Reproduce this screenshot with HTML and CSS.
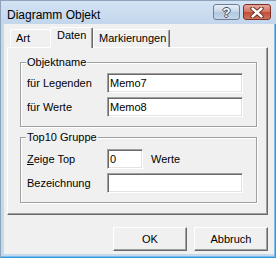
FILE: index.html
```html
<!DOCTYPE html>
<html lang="de">
<head>
    <meta charset="UTF-8">
    <title>Diagramm Objekt</title>
    <link rel="stylesheet" href="styles.css">
</head>
<body>
<div class="window">
    <div class="titlebar">
        <span class="title">Diagramm Objekt</span>
        <span class="cbtn help">?</span>
        <span class="cbtn close">
            <svg width="16" height="11" viewBox="0 0 16 11">
                <path d="M3.5 1.5 L12.5 9.5 M12.5 1.5 L3.5 9.5" stroke="#5a1f17" stroke-width="4.2" stroke-linecap="round"/>
                <path d="M3.5 1.5 L12.5 9.5 M12.5 1.5 L3.5 9.5" stroke="#fff" stroke-width="2.4" stroke-linecap="round"/>
            </svg>
        </span>
    </div>
    <div class="client">
        <div class="tabs">
            <span class="tab tab-art">Art</span>
            <span class="tab active">Daten</span>
            <span class="tab tab-mark">Markierungen</span>
        </div>
        <div class="panel">
            <fieldset class="group">
                <legend>Objektname</legend>
                <div class="row"><label>für Legenden</label><input type="text" value="Memo7"></div>
                <div class="row"><label>für Werte</label><input type="text" value="Memo8"></div>
            </fieldset>
            <fieldset class="group group2">
                <legend>Top10 Gruppe</legend>
                <div class="row"><label><u>Z</u>eige Top</label><input type="text" class="short" value="0"><span class="unit">Werte</span></div>
                <div class="row"><label>Bezeichnung</label><input type="text" value=""></div>
            </fieldset>
        </div>
        <div class="buttons">
            <button class="btn">OK</button>
            <button class="btn">Abbruch</button>
        </div>
    </div>
</div>
</body>
</html>
```

FILE: styles.css
```css
* {
    margin: 0;
    padding: 0;
    box-sizing: border-box;
}

body {
    font-family: "Liberation Sans", Arial, sans-serif;
    font-size: 11px;
    color: #000;
    background: #fff;
}

.window {
    width: 276px;
    height: 258px;
    display: flex;
    flex-direction: column;
    background: #c4d8ee;
    border-top: 1px solid #8ea4bd;
    border-left: 1px solid #8ea4bd;
    box-shadow: inset -1px -1px 0 #2c9be0, inset -2px -2px 0 #7fbce8;
}

/* title bar */
.titlebar {
    height: 23px;
    display: flex;
    align-items: flex-start;
    padding: 0 5px 0 6px;
    background: linear-gradient(#d3e3f4, #c2d6ec);
}

.title {
    flex: 1;
    font-size: 12px;
    line-height: 14px;
    padding-top: 7px;
}

.cbtn {
    margin-top: 3px;
    height: 16px;
    border-radius: 3px;
    display: flex;
    align-items: center;
    justify-content: center;
}

.help {
    width: 27px;
    border: 1px solid #6e7f95;
    background: linear-gradient(#e6eef7, #c6d5e6 50%, #b3c6db 51%, #c5d6e8);
    color: #fff;
    font-weight: bold;
    font-size: 13px;
    text-shadow: 1px 0 0 #3d4c60, -1px 0 0 #3d4c60, 0 1px 0 #3d4c60, 0 -1px 0 #3d4c60;
}

.close {
    width: 28px;
    margin-left: 3px;
    border: 1px solid #7a3026;
    background: linear-gradient(#e8a89b, #d0715f 50%, #c24c36 51%, #d0745c);
}

/* client area */
.client {
    flex: 1;
    display: flex;
    flex-direction: column;
    margin: 0 2px 4px 3px;
    padding: 3px 6px 3px 3px;
    background: #f0f0f0;
}

.tabs {
    height: 20px;
    display: flex;
    align-items: flex-end;
    padding-left: 3px;
}

.tab {
    height: 18px;
    padding: 2px 0 0 5px;
    line-height: 13px;
    background: #f0f0f0;
    border-top: 1px solid #fff;
    border-left: 1px solid #fff;
    border-right: 1px solid #696969;
    border-radius: 2px 2px 0 0;
    box-shadow: inset -1px 0 0 #a0a0a0;
}

.tab-art {
    width: 40px;
    border-right: none;
    box-shadow: none;
}

.active {
    width: 43px;
    height: 21px;
    margin-bottom: -1px;
    padding: 1px 0 0 6px;
    position: relative;
    z-index: 1;
}

.tab-mark {
    width: 77px;
    padding-left: 5px;
}

.panel {
    flex: 1;
    display: flex;
    flex-direction: column;
    gap: 4px;
    padding: 8px 10px 0 12px;
    border-top: 1px solid #fff;
    border-left: 1px solid #fff;
    border-right: 1px solid #696969;
    border-bottom: 1px solid #696969;
    box-shadow: inset -1px -1px 0 #a0a0a0;
}

.group {
    border: 1px solid #a0a0a0;
    padding: 5px 10px 9px 6px;
    box-shadow: inset 1px 1px 0 #fff, 1px 1px 0 #fff;
    display: flex;
    flex-direction: column;
    gap: 4px;
}

.group2 {
    padding-top: 6px;
}

.group legend {
    line-height: 12px;
    padding: 0 1px;
    margin-left: -1px;
    background: #f0f0f0;
}

.row {
    display: flex;
    align-items: center;
    height: 20px;
}

.row label {
    width: 80px;
}

.row input {
    width: 136px;
    height: 20px;
    padding: 0 2px;
    font: inherit;
    color: #000;
    background: #fff;
    border-top: 1px solid #a0a0a0;
    border-left: 1px solid #a0a0a0;
    border-right: 1px solid #fff;
    border-bottom: 1px solid #fff;
    box-shadow: inset 1px 1px 0 #696969, inset -1px -1px 0 #e3e3e3;
    outline: none;
}

.row input.short {
    width: 36px;
}

.unit {
    margin-left: 8px;
}

/* buttons */
.buttons {
    display: flex;
    justify-content: flex-end;
    gap: 7px;
    margin-top: 12px;
}

.btn {
    width: 74px;
    height: 24px;
    font: inherit;
    color: #000;
    background: #f0f0f0;
    border-top: 1px solid #fff;
    border-left: 1px solid #fff;
    border-right: 1px solid #696969;
    border-bottom: 1px solid #696969;
    box-shadow: inset -1px -1px 0 #a0a0a0;
}
```
